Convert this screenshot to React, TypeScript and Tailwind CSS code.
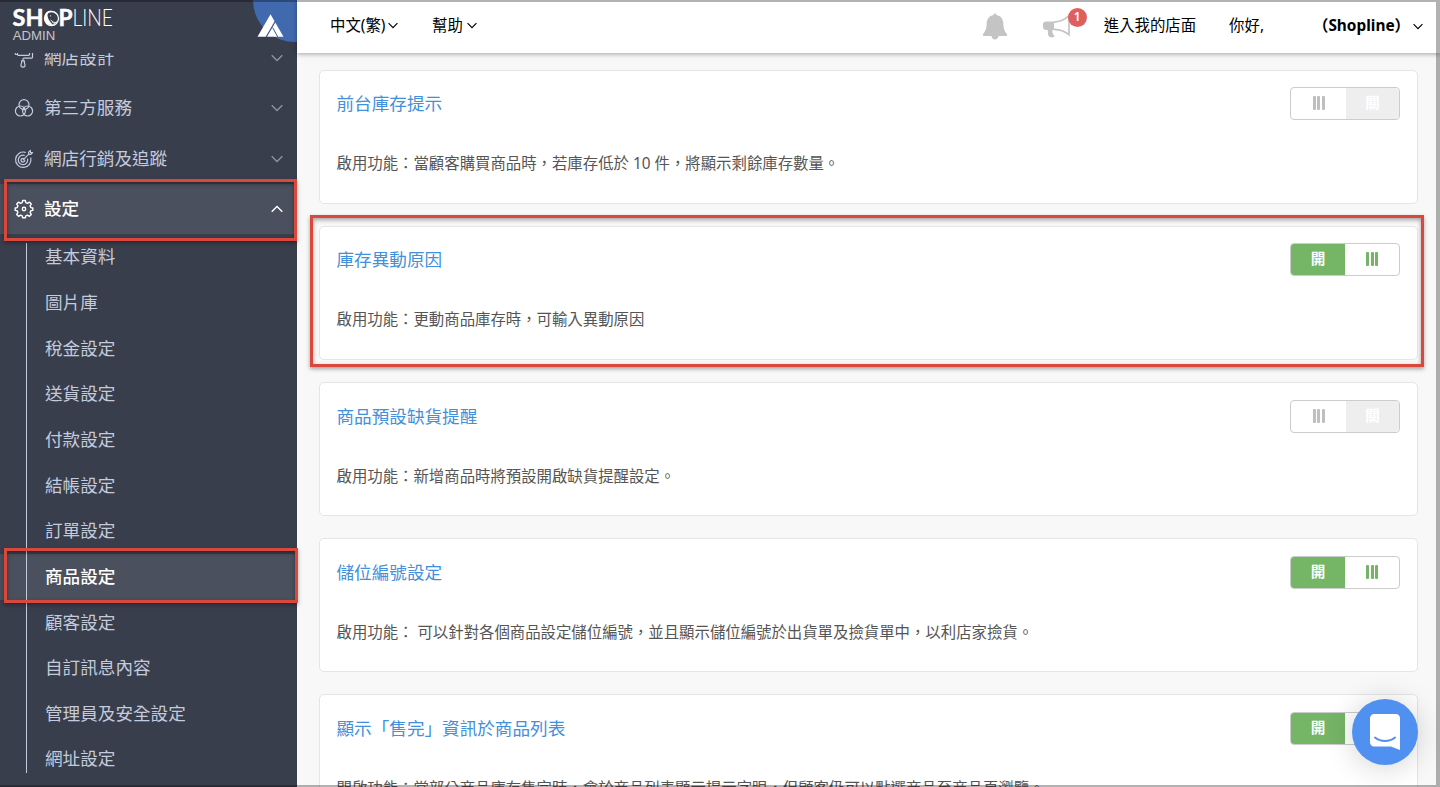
import type { ReactNode } from 'react';

interface MenuItem {
  label: string;
  icon: ReactNode;
  open?: boolean;
}

interface FeatureCard {
  title: string;
  description: string;
  enabled: boolean;
}

const iconProps = {
  width: 20,
  height: 20,
  viewBox: '0 0 20 20',
  fill: 'none',
  stroke: 'currentColor',
  strokeWidth: 1.2,
  strokeLinecap: 'round',
  strokeLinejoin: 'round',
} as const;

const RollerIcon = () => (
  <svg {...iconProps}>
    <path d="M3.5 1.5h12v5c0 .5-.3.8-.8.8H4.3c-.5 0-.8-.3-.8-.8zM3.5 6.5H2.3c-.6 0-1-.4-1-1V4M15.500 4.500h2.200c.5 0 .8.3.8.8v4c0 .5-.3.8-.8.8H10c-.6 0-1 .4-1 1v1.700" />
    <path d="M7.600 12.900h2.800v2l.6 2c.3 1.300-.6 2.200-2 2.200s-2.300-.9-2-2.200l.6-2z" />
  </svg>
);

const CirclesIcon = () => (
  <svg {...iconProps}>
    <circle cx="10" cy="6.600" r="5" />
    <circle cx="6.400" cy="13" r="5" />
    <circle cx="13.600" cy="13" r="5" />
  </svg>
);

const TargetIcon = () => (
  <svg {...iconProps}>
    <path d="M11.300 3.300A7.700 7.700 0 1 0 16.800 9" />
    <path d="M10.300 6.400A4.700 4.700 0 1 0 13.600 10" />
    <path d="M9.200 9.300A1.900 1.900 0 1 0 10.800 11M9.200 10.800l5.600-5.600M14.600 5.400V3.200l1.800-1.800v2.200h2.200l-1.800 1.800z" />
  </svg>
);

// Eight rounded teeth with notches between them
const GearIcon = () => (
  <svg {...iconProps} strokeWidth={1.4}>
    <circle cx="10" cy="10" r="1.700" />
    <path d="M8.600 1.500h2.800l.4 2.100 1.700.7 1.900-1.200 1.900 1.900-1.200 1.900.7 1.700 2 .4v2.400l-2 .4-.7 1.700 1.200 1.900-1.900 1.900-1.900-1.200-1.700.7-.4 1.900H8.600l-.4-1.900-1.700-.7-1.900 1.200-1.900-1.900 1.200-1.900-.7-1.700-2-.4V9l2-.4.7-1.700L2.700 5l1.900-1.900 1.900 1.200 1.700-.7z" />
  </svg>
);

const Chevron = ({ className = '' }: { className?: string }) => (
  <svg className={className} viewBox="0 0 12 8" fill="none" stroke="currentColor" strokeWidth="1.400">
    <path d="M.7 1.200 6 6.600l5.300-5.400" />
  </svg>
);

const menuItems: MenuItem[] = [
  { label: '網店設計', icon: <RollerIcon /> },
  { label: '第三方服務', icon: <CirclesIcon /> },
  { label: '網店行銷及追蹤', icon: <TargetIcon /> },
  { label: '設定', icon: <GearIcon />, open: true },
];

const settingItems = [
  '基本資料',
  '圖片庫',
  '稅金設定',
  '送貨設定',
  '付款設定',
  '結帳設定',
  '訂單設定',
  '商品設定',
  '顧客設定',
  '自訂訊息內容',
  '管理員及安全設定',
  '網址設定',
];

const cards: FeatureCard[] = [
  {
    title: '前台庫存提示',
    description: '啟用功能：當顧客購買商品時，若庫存低於 10 件，將顯示剩餘庫存數量。',
    enabled: false,
  },
  {
    title: '庫存異動原因',
    description: '啟用功能：更動商品庫存時，可輸入異動原因',
    enabled: true,
  },
  {
    title: '商品預設缺貨提醒',
    description: '啟用功能：新增商品時將預設開啟缺貨提醒設定。',
    enabled: false,
  },
  {
    title: '儲位編號設定',
    description: '啟用功能： 可以針對各個商品設定儲位編號，並且顯示儲位編號於出貨單及撿貨單中，以利店家撿貨。',
    enabled: true,
  },
  {
    title: '顯示「售完」資訊於商品列表',
    description: '開啟功能：當部分商品庫存售完時，會於商品列表顯示提示字眼，但顧客仍可以點選商品至商品頁瀏覽。',
    enabled: true,
  },
];

const Logo = () => (
  <svg width="297" height="53" viewBox="0 0 297 53" className="shrink-0">
    <path d="M253 0h44v42A42 42 0 0 1 253 0z" fill="#4169ae" />
    <path d="M270.500 14.300l13 22.400h-26z" fill="#fff" />
    <path d="M275.500 21l-9.300 16" stroke="#40598f" strokeWidth="1.300" />
    <path d="M272.600 27.500l5.200 9.500" stroke="#40598f" strokeWidth="1" />
    <g fontFamily="Lato, sans-serif">
      <text x="12.500" y="26" fontSize="22.500" fontWeight="700" fill="#fff" stroke="#fff" strokeWidth=".5" textLength="31" lengthAdjust="spacingAndGlyphs">
        SH
      </text>
      <text x="58.500" y="26" fontSize="22.500" fontWeight="700" fill="#fff" stroke="#fff" strokeWidth=".5" textLength="14" lengthAdjust="spacingAndGlyphs">
        P
      </text>
      <text x="72.500" y="26" fontSize="22.500" fontWeight="300" fill="#fff" textLength="40.500" lengthAdjust="spacingAndGlyphs">
        LINE
      </text>
    </g>
    <circle cx="51.500" cy="18.500" r="7" fill="none" stroke="#fff" strokeWidth="1.300" />
    <path d="M44.500 18c0-5 3-8 7.500-7.500-3.300.8-5 3-4.300 6 .5 3 2.300 5.500 5.300 8.500-5 .5-8.500-2.500-8.500-7z" fill="#fff" />
    <path d="M50 15.500l1 .8M55 12.500l1.500 1.500M50.500 20l2.500 2M53 24.500l4-3M52 22l3.500.5" stroke="#fff" strokeWidth=".9" />
    <text x="12.700" y="40" fontSize="13.700" fill="#c4c6cc" fontFamily="Liberation Sans, sans-serif" textLength="42.500" lengthAdjust="spacingAndGlyphs">
      ADMIN
    </text>
  </svg>
);

const Sidebar = () => (
  <aside className="relative flex h-full w-[297px] shrink-0 flex-col overflow-hidden bg-[#393e4d] text-[17.600px] text-[#c4cbdc]">
    <Logo />
    <nav className="min-h-0 flex-1 overflow-hidden">
      <ul className="-mt-[20.200px]">
        {menuItems.map((item) => (
          <li
            key={item.label}
            className={`flex h-[50.400px] items-center pr-[14px] pl-[14px] ${
              item.open ? 'bg-[#4a505d] font-medium text-white' : ''
            }`}
          >
            {item.icon}
            <span className="-mt-[2px] ml-[10px] flex-1">{item.label}</span>
            <Chevron
              className={item.open ? 'h-[8px] w-[12px] rotate-180' : 'h-[8px] w-[12px] text-[#8d92a1]'}
            />
          </li>
        ))}
      </ul>
      <ul className="relative">
        {settingItems.map((label) => (
          <li
            key={label}
            className={`flex h-[45.660px] items-center pb-[1.500px] pl-[45px] ${
              label === '商品設定' ? 'bg-[#4a505d] font-medium text-white' : ''
            }`}
          >
            {label}
          </li>
        ))}
        <li className="absolute top-[9px] left-[26px] h-[530px] w-px bg-[#c4cbdc]" />
      </ul>
    </nav>
  </aside>
);

const Header = () => (
  <header className="relative z-10 flex h-[53px] shrink-0 items-center bg-white pr-[17px] pb-[2px] pl-[33px] text-[15.400px] text-black shadow-[0_1px_5px_rgba(0,0,0,0.35)]">
    <div className="flex w-[102px] items-center">
      中文(繁)
      <Chevron className="mt-px ml-[3px] h-[7px] w-[10px]" />
    </div>
    <div className="flex items-center">
      幫助
      <Chevron className="mt-px ml-[4px] h-[7px] w-[10px]" />
    </div>
    <div className="ml-auto flex items-center">
      <svg width="26" height="28" viewBox="0 0 26 28" fill="#c4c4c4" className="mt-[2px] mr-[35px]">
        <path d="M13 .5c1 0 1.500.700 1.500 1.600 4.200.8 6.500 3.900 6.800 8 .3 5.700 1 8.200 3.600 10.900.6.7.300 2-.9 2H16.500c-.300 2.200-1.700 3.500-3.500 3.500s-3.200-1.300-3.500-3.500H2c-1.200 0-1.500-1.300-.9-2 2.600-2.700 3.300-5.200 3.600-10.900.3-4.100 2.600-7.200 6.800-8C11.500 1.200 12 .5 13 .5z" />
      </svg>
      <div className="relative mt-[2px] mr-[33px] h-[26px] w-[28px]">
        <svg width="28" height="26" viewBox="0 0 28 26">
          <path d="M3 7.500h8v8.500H9.500c-.4 2 .1 4 2.300 6.300-1.600 1.600-5 1.500-6.200-.2-.7-2-1-4-.7-6.100H3c-1.700 0-3-1.300-3-3v-2.500c0-1.700 1.300-3 3-3z" fill="#c4c4c4" />
          <path d="M11 8.200c6-.4 11-2.700 15-6.500v19c-4-3.700-9-5-15-5.400" fill="none" stroke="#c4c4c4" strokeWidth="1.700" />
        </svg>
        <span className="absolute -top-[6px] left-[25px] flex size-[19px] items-center justify-center rounded-full bg-[#df5f61] pb-px text-[12px] font-semibold text-white">
          1
        </span>
      </div>
      <span className="mr-[33px]">進入我的店面</span>
      <span className="mr-[49px]">你好,</span>
      <span className="font-bold">（Shopline）</span>
      <Chevron className="mt-px ml-[3px] h-[7px] w-[10px]" />
    </div>
  </header>
);

const Toggle = ({ enabled }: { enabled: boolean }) => (
  <div className="flex h-[33px] w-[110px] overflow-hidden rounded-[4px] border border-[#cccccc] bg-white text-[14.600px] font-bold">
    {enabled && (
      <span className="flex w-[54px] items-center justify-center bg-[#75b566] pb-px text-white">開</span>
    )}
    <span
      className={`flex flex-1 items-center justify-center gap-[1.500px] pb-px ${enabled ? 'text-[#75b566]' : 'text-[#bfbfbf]'}`}
    >
      <i className="h-[14px] w-[3px] rounded-[1px] bg-current" />
      <i className="h-[14px] w-[3px] rounded-[1px] bg-current" />
      <i className="h-[14px] w-[3px] rounded-[1px] bg-current" />
    </span>
    {!enabled && (
      <span className="flex w-[53px] items-center justify-center bg-[#eeeeee] pb-px text-white">關</span>
    )}
  </div>
);

const Card = ({ title, description, enabled }: FeatureCard) => (
  <section className="h-[134px] shrink-0 rounded-[5px] border border-[#e5e5e5] bg-white pr-[17px] pl-[16.500px]">
    <div className="flex items-start justify-between pt-[16.350px]">
      <h3 className="text-[17.600px] leading-[32px] text-[#428fdb]">{title}</h3>
      <Toggle enabled={enabled} />
    </div>
    <p className="mt-[32px] text-[15.400px] leading-[24px] whitespace-nowrap text-[#555555]">{description}</p>
  </section>
);

// Red callout frame drawn above the highlighted rows
const Callout = ({ className }: { className: string }) => (
  <div
    className={`pointer-events-none absolute z-20 border-[3.500px] border-[#d9483a] shadow-[0_2px_4px_rgba(0,0,0,0.35),inset_0_2px_4px_rgba(0,0,0,0.35)] ${className}`}
  />
);

export default function App() {
  return (
    <div
      lang="zh-Hant"
      className="relative flex h-[787px] w-[1440px] overflow-hidden bg-[#f8f8f8] font-['Noto_Sans','Noto_Sans_CJK_TC',sans-serif]"
    >
      <Sidebar />
      <div className="flex min-w-0 flex-1 flex-col">
        <Header />
        <main className="flex min-h-0 flex-1 flex-col gap-[22.100px] overflow-hidden pt-[17px] pr-[22px] pl-[22px]">
          {cards.map((card) => (
            <Card key={card.title} {...card} />
          ))}
        </main>
      </div>

      <Callout className="top-[179px] left-[4px] h-[62px] w-[293px]" />
      <Callout className="top-[548px] left-[4px] h-[55px] w-[294px]" />
      <Callout className="top-[215px] left-[310px] h-[152px] w-[1114px]" />

      <button className="absolute top-[699px] left-[1352px] z-20 flex size-[66px] items-center justify-center rounded-full bg-[#4f90f0] shadow-[0_2px_30px_rgba(0,0,0,0.18)]">
        <svg width="32" height="38" viewBox="0 0 32 38">
          <path d="M5 1h22c2.200 0 4 1.800 4 4v32l-9-3.500H5c-2.200 0-4-1.800-4-4V5c0-2.200 1.800-4 4-4z" fill="#fff" />
          <path d="M6 24.500c6 4.700 14 4.700 20 0" fill="none" stroke="#4f90f0" strokeWidth="2" strokeLinecap="round" />
        </svg>
      </button>

      <div className="pointer-events-none absolute inset-0 z-30 border-t-2 border-r-4 border-b-2 border-black/30" />
    </div>
  );
}
